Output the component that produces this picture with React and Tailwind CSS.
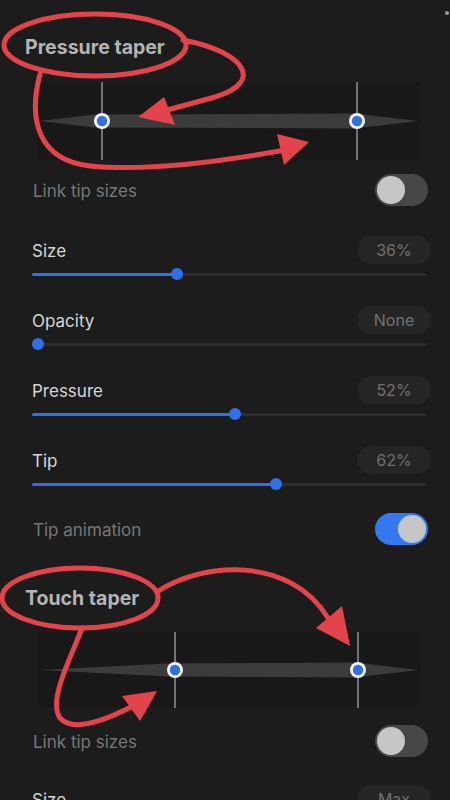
import React from "react";

function Taper({ h, a, b }) {
  const w = 383;
  const c = h / 2;
  return (
    <div className="relative mx-[30px] ml-[37px] bg-[#181818]" style={{ height: h }}>
      <svg width={w} height={h} className="absolute left-0 top-0">
        <polygon
          points={`3,${c} ${a - 8},${c - 6.5} ${b},${c - 7.5} ${b + 10},${c - 6} ${w - 2},${c} ${b + 10},${c + 6} ${b},${c + 7.5} ${a - 8},${c + 6.5}`}
          fill="#3b3b3b"
        />
        <line x1={a} y1="0" x2={a} y2={h} stroke="#cfcfcf" strokeWidth="1" />
        <line x1={b} y1="0" x2={b} y2={h} stroke="#cfcfcf" strokeWidth="1" />
        <circle cx={a} cy={c} r="8" fill="#f2f2f2" />
        <circle cx={a} cy={c} r="5.2" fill="#2f6fe8" />
        <circle cx={b} cy={c} r="8" fill="#f2f2f2" />
        <circle cx={b} cy={c} r="5.2" fill="#2f6fe8" />
      </svg>
    </div>
  );
}

function Toggle({ on }) {
  return (
    <div
      className={`flex h-[32px] w-[53px] items-center rounded-full px-[2px] ${
        on ? "justify-end bg-[#3478f0]" : "justify-start bg-[#474747]"
      }`}
    >
      <div className="h-[28px] w-[28px] rounded-full bg-[#c6c6c6]" />
    </div>
  );
}

function ToggleRow({ label, on, h }) {
  return (
    <div className={`flex items-center justify-between pl-[33px] pr-[22px] ${h}`}>
      <span className="translate-y-[2px] text-[17px] text-[#777777]">{label}</span>
      <Toggle on={on} />
    </div>
  );
}

function SliderRow({ label, value, pct, pt = "pt-[16px]" }) {
  return (
    <div className={`h-[70px] pl-[32px] pr-[19px] ${pt}`}>
      <div className="flex h-[28px] items-center justify-between">
        <span className="translate-y-[2px] text-[17px] text-[#d6d6d6]">{label}</span>
        <div className="flex h-[28px] w-[74px] items-center justify-center rounded-full bg-[#252525] text-[16px] text-[#717171]">
          {value}
        </div>
      </div>
      <div className="relative mr-[5px] flex h-[20px] items-center">
        <div className="h-[3px] w-full rounded-full bg-[#2c2c2c]" />
        <div
          className="absolute left-0 h-[3px] rounded-full bg-[#2f6fe8]"
          style={{ width: `${pct}%` }}
        />
        <div
          className="absolute h-[12px] w-[12px] -translate-x-1/2 rounded-full bg-[#2f6fe8]"
          style={{ left: `${pct}%` }}
        />
      </div>
    </div>
  );
}

export default function App() {
  const red = "#e3434b";
  return (
    <div className="relative h-[800px] w-[450px] overflow-hidden bg-[#1c1c1c] font-['Inter',sans-serif]">
      <div className="h-[82px] pl-[25px] pt-[35px]">
        <div className="text-[19.5px] font-bold leading-[24px] text-[#b4b4b4]">Pressure taper</div>
      </div>
      <Taper h={78} a={65} b={320} />
      <ToggleRow label="Link tip sizes" h="h-[60px]" />
      <SliderRow label="Size" value="36%" pct={36.8} />
      <SliderRow label="Opacity" value="None" pct={1.5} />
      <SliderRow label="Pressure" value="52%" pct={51.5} />
      <SliderRow label="Tip" value="62%" pct={61.9} />
      <ToggleRow label="Tip animation" on h="h-[58px]" />
      <div className="h-[74px] pl-[25px] pt-[28px]">
        <div className="text-[19.5px] font-bold leading-[24px] text-[#b4b4b4]">Touch taper</div>
      </div>
      <Taper h={76} a={138} b={321} />
      <ToggleRow label="Link tip sizes" h="h-[66px]" />
      <SliderRow label="Size" value="Max" pct={100} pt="pt-[11px]" />

      <div className="absolute right-[1px] top-[11px] h-[4px] w-[4px] rounded-full bg-[#9a9a9a]" />

      <svg className="pointer-events-none absolute left-0 top-0" width="450" height="800">
        <g fill="none" stroke={red} strokeWidth="5" strokeLinecap="round">
          <ellipse cx="95" cy="45" rx="91" ry="31" />
          <path d="M 183 40 C 245 52, 265 82, 215 97 L 160 112" />
          <path d="M 40 74 C 28 120, 38 160, 90 166 C 150 172, 230 160, 285 150" />
          <ellipse cx="80" cy="598" rx="78" ry="30" />
          <path d="M 157 592 C 200 562, 290 555, 328 618" />
          <path d="M 82 628 C 70 660, 48 700, 60 718 C 74 734, 110 718, 135 705" />
        </g>
        <g fill={red}>
          <polygon points="138,117 175,125 164,97" />
          <polygon points="309,142 277,134 284,165" />
          <polygon points="350,646 316,628 342,606" />
          <polygon points="157,691 122,696 140,721" />
        </g>
      </svg>
    </div>
  );
}
